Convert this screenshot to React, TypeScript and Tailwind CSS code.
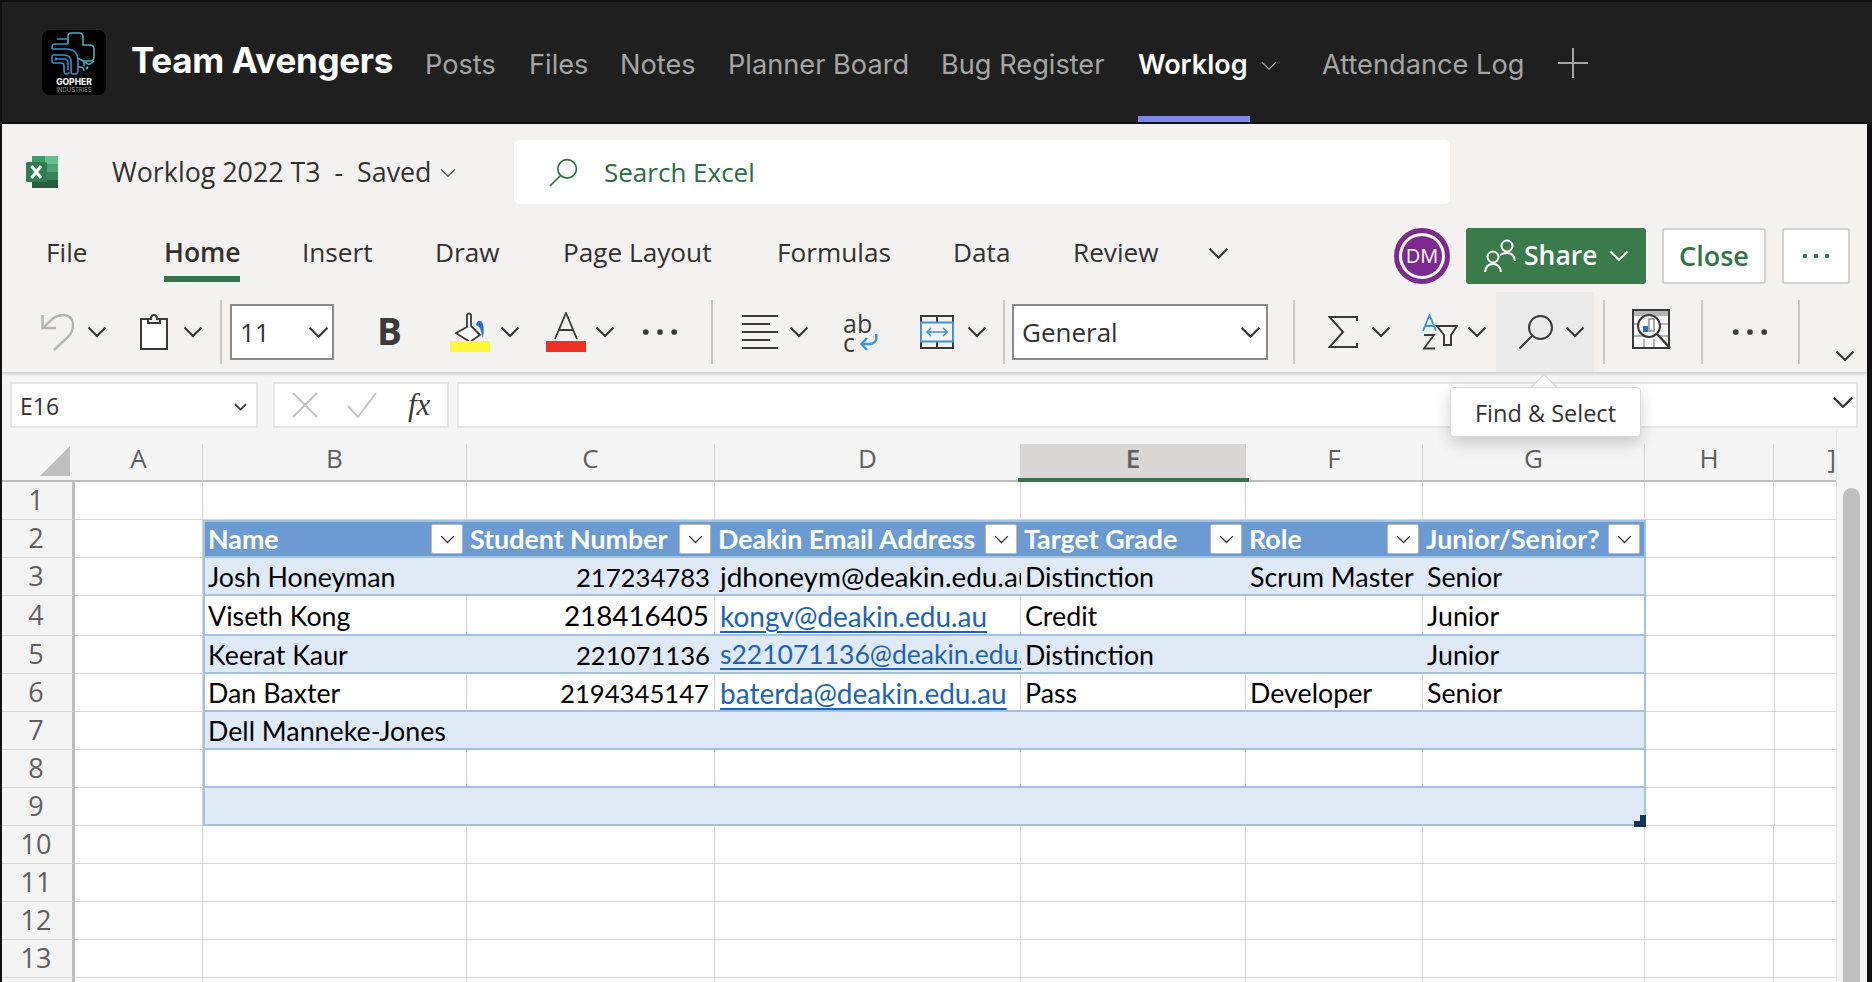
import React from "react";

const UI = "font-['Open_Sans',sans-serif]";
const SHEET = "font-[Lato,sans-serif]";

function Chev({ className = "", w = 20, color = "#333333", sw = 2 }: { className?: string; w?: number; color?: string; sw?: number }) {
  const h = Math.round(w * 0.6);
  return (
    <svg width={w} height={h} viewBox="0 0 20 12" fill="none" className={`shrink-0 ${className}`}>
      <path d="M1.5 1.5 L10 10 L18.5 1.5" stroke={color} strokeWidth={sw} />
    </svg>
  );
}

function Sep({ className = "" }: { className?: string }) {
  return <div className={`w-[2px] h-[64px] bg-[#c8c8c8] shrink-0 ${className}`} />;
}

function Dots({ className = "", w = 36, color = "#3b3a39" }: { className?: string; w?: number; color?: string }) {
  return (
    <svg width={w} height="8" viewBox="0 0 38 8" className={`shrink-0 ${className}`}>
      <circle cx="4" cy="4" r="3" fill={color} />
      <circle cx="19" cy="4" r="3" fill={color} />
      <circle cx="34" cy="4" r="3" fill={color} />
    </svg>
  );
}

function Logo() {
  return (
    <svg width="64" height="65" viewBox="0 0 64 65" className="shrink-0">
      <rect width="64" height="65" rx="8" fill="#000" />
      <g fill="none" strokeWidth="1.6">
        <path d="M26 14 V6 Q26 3 29 3 H37 Q41 3 41 7 V15 H48 Q52 15 52 19 V27 Q52 31 48 31 H42" stroke="#4fb0b8" />
        <path d="M42 31 V36" stroke="#3f9fb8" />
        <path d="M26 14 H13 Q10 14 10 17 V19 M25 9 H15" stroke="#3a8fc8" />
        <path d="M10 19 H24 Q36 19 36 31 V40 Q36 44 33 44 H31 Q29 44 29 41 V32 Q29 25 22 25 H11 Q10 25 10 27 V31 Q10 33 12 33 H19 Q22 33 22 36 V41 Q22 44 25 44 Q27 44 27 42" stroke="#3a8fc8" />
        <path d="M15 29 H22 Q26 29 26 33 V40" stroke="#2f8ad0" />
        <path d="M36 37 H38 Q42 37 42 41 M36 28 L46 34 Q48 35 52 31" stroke="#4aa5c0" />
      </g>
      <circle cx="14" cy="29" r="1.4" fill="#3a8fc8" />
      <circle cx="45" cy="38" r="1.4" fill="#4fb0b8" />
      <text x="32" y="55" textAnchor="middle" fill="#f1f1f1" fontSize="8.5" fontWeight="800" fontFamily="Inter,sans-serif">GOPHER</text>
      <text x="32" y="62" textAnchor="middle" fill="#9a9a9a" fontSize="6" fontFamily="Inter,sans-serif">INDUSTRIES</text>
    </svg>
  );
}

function ExcelIcon() {
  return (
    <svg width="32" height="32" viewBox="0 0 32 32" className="shrink-0">
      <rect x="6" y="0" width="13" height="8" fill="#3f9c6b" />
      <rect x="19" y="0" width="13" height="8" fill="#67c08c" />
      <rect x="6" y="8" width="13" height="8" fill="#3c9668" />
      <rect x="19" y="8" width="13" height="8" fill="#4aa474" />
      <rect x="6" y="16" width="13" height="8" fill="#256b42" />
      <rect x="19" y="16" width="13" height="8" fill="#37845a" />
      <rect x="6" y="24" width="26" height="8" fill="#285f3f" />
      <rect x="0" y="6" width="21" height="20" rx="1.5" fill="#2f7d4e" />
      <path d="M5.5 10 L15 22 M15 10 L5.5 22" stroke="#fff" strokeWidth="3" />
    </svg>
  );
}

function SearchGlass({ w, h, color, sw = 2, className = "" }: { w: number; h: number; color: string; sw?: number; className?: string }) {
  return (
    <svg width={w} height={h} viewBox="0 0 36 36" fill="none" className={`shrink-0 ${className}`}>
      <circle cx="22.5" cy="13.5" r="11.5" stroke={color} strokeWidth={sw} fill="none" />
      <path d="M14 22 L1.5 34.5" stroke={color} strokeWidth={sw} />
    </svg>
  );
}

function Undo({ className = "" }: { className?: string }) {
  return (
    <svg width="33" height="38" viewBox="0 0 33 38" fill="none" className={`shrink-0 ${className}`}>
      <path d="M1.5 2 V15 H15" stroke="#b3b3b3" strokeWidth="2.4" />
      <path d="M2 15 L12 5.5 Q17 2 23 2 Q32 3 32 12 Q32 18 28 23 L13 37" stroke="#b3b3b3" strokeWidth="2.4" />
    </svg>
  );
}

function Clipboard({ className = "" }: { className?: string }) {
  return (
    <svg width="28" height="36" viewBox="0 0 28 36" fill="none" className={`shrink-0 ${className}`}>
      <path d="M8 5 H1 V35 H27 V5 H20" stroke="#3b3a39" strokeWidth="2" fill="#fff" />
      <path d="M8 9 V5 H11 Q11 1 14 1 Q17 1 17 5 H20 V9 Z" stroke="#3b3a39" strokeWidth="2" fill="#f3f2f1" />
    </svg>
  );
}

function FillColor({ className = "" }: { className?: string }) {
  return (
    <svg width="40" height="40" viewBox="0 0 40 40" fill="none" className={`shrink-0 ${className}`}>
      <path d="M17 15 V3 Q19 0 21 3 V14 L30 23 L20 30 L6 21 Z" stroke="#3b3a39" strokeWidth="1.8" fill="#fff" />
      <path d="M26 13 Q27 8 31 9 Q35 12 33 26 Q31 20 30 16 Q28 14 26 13 Z" fill="#2a6fc0" />
      <rect x="0" y="29" width="40" height="11" fill="#fdf83a" />
    </svg>
  );
}

function FontColor({ className = "" }: { className?: string }) {
  return (
    <svg width="40" height="40" viewBox="0 0 40 40" fill="none" className={`shrink-0 ${className}`}>
      <path d="M9 27 L20 1 L31 27 M13 18 H27" stroke="#3b3a39" strokeWidth="1.8" />
      <rect x="0" y="29" width="40" height="11" fill="#ee2f24" />
    </svg>
  );
}

function AlignLeft({ className = "" }: { className?: string }) {
  return (
    <svg width="36" height="34" viewBox="0 0 36 34" className={`shrink-0 ${className}`}>
      <path d="M0 1 H36 M0 9 H28 M0 17 H36 M0 25 H28 M0 33 H36" stroke="#3b3a39" strokeWidth="2" />
    </svg>
  );
}

function Wrap({ className = "" }: { className?: string }) {
  return (
    <div className={`relative w-[36px] h-[38px] shrink-0 ${className}`}>
      <span className={`block ${UI} text-[25px] leading-[21px] text-[#3b3a39]`}>ab</span>
      <span className={`block ${UI} text-[25px] leading-[16px] text-[#3b3a39]`}>c</span>
      <svg width="20" height="18" viewBox="0 0 20 18" fill="none" className="absolute right-[0px] bottom-[0px]">
        <path d="M17 1 Q19 10 11 11 H3 M8 5 L2.5 11 L8 17" stroke="#3f94d4" strokeWidth="2.4" />
      </svg>
    </div>
  );
}

function Merge({ className = "" }: { className?: string }) {
  return (
    <svg width="34" height="34" viewBox="0 0 34 34" fill="none" className={`shrink-0 ${className}`}>
      <rect x="1" y="1" width="32" height="32" stroke="#3b3a39" strokeWidth="2" fill="#f3f2f1" />
      <path d="M17 1 V7 M17 27 V33" stroke="#3b3a39" strokeWidth="2" />
      <rect x="1" y="7.5" width="32" height="19" stroke="#3f94d4" strokeWidth="2" fill="#f3f2f1" />
      <path d="M7 17 H27 M11 13 L7 17 L11 21 M23 13 L27 17 L23 21" stroke="#3f94d4" strokeWidth="1.6" />
    </svg>
  );
}

function Sigma({ className = "" }: { className?: string }) {
  return (
    <svg width="30" height="32" viewBox="0 0 30 32" fill="none" className={`shrink-0 ${className}`}>
      <path d="M29 5 V1 H1.5 L15 16 L1.5 31 H29 V27" stroke="#3b3a39" strokeWidth="2" />
    </svg>
  );
}

function SortFilter({ className = "" }: { className?: string }) {
  return (
    <svg width="36" height="36" viewBox="0 0 36 36" fill="none" className={`shrink-0 ${className}`}>
      <path d="M1 17 L7.5 1 L14 17 M3.5 12 H11.5" stroke="#3f94d4" strokeWidth="1.8" />
      <path d="M2 21 H12 L2 34.5 H13" stroke="#3b3a39" strokeWidth="1.8" />
      <path d="M15 12 H35 L29 21 V31 H22 V21 Z" stroke="#3b3a39" strokeWidth="2" fill="#f3f2f1" />
    </svg>
  );
}

function Analyze({ className = "" }: { className?: string }) {
  return (
    <svg width="40" height="40" viewBox="0 0 40 40" fill="none" className={`shrink-0 ${className}`}>
      <rect x="1" y="1" width="36" height="38" fill="#fafafa" stroke="#3b3a39" strokeWidth="2" />
      <rect x="2" y="2" width="34" height="5" fill="#b5b5b5" />
      <path d="M2 15 H8 M28 15 H36 M2 27 H12 M28 27 H36 M12 30 V38 M22 30 V38" stroke="#b5b5b5" strokeWidth="2" />
      <circle cx="17" cy="17" r="11" fill="#fff" stroke="#3b3a39" strokeWidth="2" />
      <rect x="11" y="17" width="5" height="6" fill="#2a6fc0" />
      <rect x="17" y="10" width="5" height="12" fill="#fff" stroke="#8a8a8a" strokeWidth="1.5" />
      <path d="M25 25 L38 39" stroke="#3b3a39" strokeWidth="2.4" />
    </svg>
  );
}

function People() {
  return (
    <svg width="32" height="34" viewBox="0 0 32 34" fill="none" className="shrink-0">
      <circle cx="9" cy="18" r="5.5" stroke="#fff" strokeWidth="2" />
      <path d="M1 33 Q2 25 9 25 Q16 25 17 33" stroke="#fff" strokeWidth="2" />
      <circle cx="23" cy="7" r="5.5" stroke="#fff" strokeWidth="2" />
      <path d="M16 16 Q19 14 23 14 Q30 14 31 22" stroke="#fff" strokeWidth="2" />
    </svg>
  );
}

function TopBar() {
  const tab = "text-[27.2px] text-[#a5a5a5] whitespace-nowrap";
  return (
    <div className="ml-[2px] mt-[2px] h-[120px] bg-[#1f1f1f] flex items-start font-['Inter',sans-serif]">
      <div className="ml-[40px] mt-[28px]">
        <Logo />
      </div>
      <div className="ml-[25px] w-[294px] mt-[34px] text-[35px] leading-[48px] font-bold text-white whitespace-nowrap tracking-[-0.3px]">Team Avengers</div>
      <div className="flex items-start h-[120px] pt-[43px] leading-[40px]">
        <div className={`${tab} w-[104px]`}>Posts</div>
        <div className={`${tab} w-[91px]`}>Files</div>
        <div className={`${tab} w-[108px]`}>Notes</div>
        <div className={`${tab} w-[213px]`}>Planner Board</div>
        <div className={`${tab} w-[197px]`}>Bug Register</div>
        <div className="w-[184px] h-[77px] flex items-start">
          <div className="w-[112px] h-[77px] border-b-[6px] border-[#7f87ea] text-[27px] font-semibold text-white">Worklog</div>
          <Chev w={16} color="#a5a5a5" sw={1.6} className="ml-[11px] mt-[16px]" />
        </div>
        <div className={`${tab} w-[236px]`}>Attendance Log</div>
        <svg width="30" height="30" viewBox="0 0 30 30" className="mt-[3px] shrink-0">
          <path d="M15 0 V30 M0 15 H30" stroke="#a5a5a5" strokeWidth="2" />
        </svg>
      </div>
    </div>
  );
}

function TitleRow() {
  return (
    <div className={`h-[92px] pt-[4px] flex items-center ${UI}`}>
      <div className="ml-[24px]">
        <ExcelIcon />
      </div>
      <div className="ml-[54px] w-[402px] flex items-center text-[26.8px] text-[#323130] whitespace-nowrap">
        <span>Worklog 2022 T3&nbsp; -&nbsp; Saved</span>
        <Chev w={16} color="#444" sw={1.6} className="ml-[8px] mt-[2px]" />
      </div>
      <div className="w-[936px] h-[64px] bg-white rounded-[6px] flex items-center pl-[35px]">
        <SearchGlass w={29} h={29} color="#2b6a3f" />
        <span className="ml-[26px] text-[26px] text-[#2d6a42]">Search Excel</span>
      </div>
    </div>
  );
}

function MenuRow() {
  const t = "h-[66px] pt-[12px] text-[26.2px] leading-[48px] text-[#323130] whitespace-nowrap border-b-[6px] border-transparent";
  return (
    <div className={`h-[76px] flex items-start ${UI}`}>
      <div className={`${t} ml-[44px] w-[118px]`}>File</div>
      <div className="w-[138px]">
        <div className="w-[76px] h-[66px] pt-[12px] text-[26.5px] leading-[48px] font-semibold text-[#323130] whitespace-nowrap border-b-[6px] border-[#35744a]">Home</div>
      </div>
      <div className={`${t} w-[133px]`}>Insert</div>
      <div className={`${t} w-[128px]`}>Draw</div>
      <div className={`${t} w-[214px]`}>Page Layout</div>
      <div className={`${t} w-[176px]`}>Formulas</div>
      <div className={`${t} w-[120px]`}>Data</div>
      <div className={`${t} w-[135px]`}>Review</div>
      <Chev w={21} className="mt-[31px]" />
      <div className="ml-[165px] mt-[12px] w-[56px] h-[56px] rounded-full border-[5px] border-[#7b2a8f] bg-white p-[3px] shrink-0">
        <div className="w-full h-full rounded-full bg-[#7b2a8f] text-white text-[20px] flex items-center justify-center">DM</div>
      </div>
      <div className="ml-[16px] mt-[12px] w-[180px] h-[56px] rounded-[3px] bg-[#3a7a4b] flex items-center pl-[18px] text-white text-[26.5px] font-semibold">
        <People />
        <span className="ml-[8px]">Share</span>
        <Chev w={20} color="#fff" className="ml-[12px]" />
      </div>
      <div className="ml-[16px] mt-[12px] w-[104px] h-[56px] rounded-[3px] bg-white border-2 border-[#d2d2d2] flex items-center justify-center text-[#35744a] text-[27px] font-semibold">Close</div>
      <div className="ml-[16px] mt-[12px] w-[68px] h-[56px] rounded-[3px] bg-white border-2 border-[#d2d2d2] flex items-center justify-center">
        <Dots w={28} color="#35744a" />
      </div>
    </div>
  );
}

function ToolRow() {
  const box = "h-[56px] bg-white border-2 border-[#8a8a8a] flex items-center shrink-0 text-[26px] text-[#323130]";
  return (
    <div className={`h-[80px] flex items-center ${UI}`}>
      <Undo className="ml-[39px]" />
      <Chev className="ml-[13px]" />
      <Clipboard className="ml-[33px]" />
      <Chev className="ml-[15px]" />
      <Sep className="ml-[17px]" />
      <div className={`${box} ml-[8px] w-[104px] pl-[8px]`}>
        <span>11</span>
        <Chev w={21} className="ml-auto mr-[3px]" />
      </div>
      <div className="ml-[43px] w-[26px] -mt-[4px] text-[37px] font-bold font-['Open_Sans',sans-serif] text-[#3b3a39] leading-none">B</div>
      <FillColor className="ml-[47px]" />
      <Chev className="ml-[10px]" />
      <FontColor className="ml-[26px]" />
      <Chev className="ml-[9px]" />
      <Dots className="ml-[27px]" />
      <Sep className="ml-[33px]" />
      <AlignLeft className="ml-[29px]" />
      <Chev className="ml-[11px]" />
      <Wrap className="ml-[34px]" />
      <Merge className="ml-[41px]" />
      <Chev className="ml-[13px]" />
      <Sep className="ml-[16px]" />
      <div className={`${box} ml-[7px] w-[256px] pl-[8px]`}>
        <span>General</span>
        <Chev w={21} className="ml-auto mr-[5px]" />
      </div>
      <Sep className="ml-[25px]" />
      <Sigma className="ml-[33px]" />
      <Chev className="ml-[13px]" />
      <SortFilter className="ml-[31px]" />
      <Chev className="ml-[9px]" />
      <div className="ml-[9px] w-[98px] h-[80px] bg-[#ebebeb] flex items-center pl-[22px] shrink-0">
        <SearchGlass w={36} h={36} color="#3b3a39" />
        <Chev className="ml-[11px]" />
      </div>
      <Sep className="ml-[9px]" />
      <Analyze className="ml-[27px] -mt-[6px]" />
      <Sep className="ml-[29px]" />
      <Dots className="ml-[29px]" w={36} />
      <Sep className="ml-[30px]" />
      <Chev className="ml-[35px] self-end mb-[10px]" />
    </div>
  );
}

function FormulaBar() {
  const box = "h-[46px] bg-white border-2 border-[#e6e6e6] flex items-center shrink-0";
  return (
    <div className={`h-[58px] pt-[10px] flex items-start bg-[#f5f5f5] ${UI}`}>
      <div className={`${box} ml-[8px] w-[248px] pl-[8px] pt-[3px] text-[23px] text-[#323130]`}>
        <span>E16</span>
        <Chev w={13} color="#333" sw={2.6} className="ml-auto mr-[9px]" />
      </div>
      <div className={`${box} ml-[15px] w-[176px] pl-[16px]`}>
        <svg width="28" height="26" viewBox="0 0 28 26" className="shrink-0">
          <path d="M2 1 L26 25 M26 1 L2 25" stroke="#c4c4c4" strokeWidth="2" />
        </svg>
        <svg width="30" height="26" viewBox="0 0 30 26" className="ml-[28px] shrink-0" fill="none">
          <path d="M1 14 L11 25 L29 1" stroke="#c4c4c4" strokeWidth="2" />
        </svg>
        <span className="ml-[31px] -mt-[2px] font-['Liberation_Serif',serif] italic text-[31px] leading-none text-[#3b3a39]">fx</span>
      </div>
      <div className={`${box} ml-[8px] w-[1401px] justify-end pr-[2px]`}>
        <Chev w={22} className="-mt-[6px]" />
      </div>
    </div>
  );
}

const HEAD = "text-[26px] text-[#5f5f5f]";

function HCell({ w, label, active = false, line = true }: { w: string; label: string; active?: boolean; line?: boolean }) {
  return (
    <div className={`${w} h-[37px] mt-[14px] pb-[8px] flex items-center justify-center ${HEAD} ${line ? "border-r border-[#d2d2d2]" : ""} ${active ? "bg-[#d8d7d5] text-[#2f7045] font-semibold" : ""}`}>
      {label}
    </div>
  );
}

function ColHeader() {
  return (
    <div className={`relative h-[52px] flex bg-[#f5f5f5] border-b-2 border-[#bdbdbd] ${UI}`}>
      <div className="w-[73px] flex items-end justify-end pr-[5px] pb-[4px]">
        <svg width="30" height="30" viewBox="0 0 30 30" className="shrink-0">
          <path d="M30 0 V30 H0 Z" fill="#bfbfbf" />
        </svg>
      </div>
      <HCell w="w-[128px]" label="A" />
      <HCell w="w-[264px]" label="B" />
      <HCell w="w-[248px]" label="C" />
      <HCell w="w-[306px]" label="D" />
      <div className="w-[225px] relative">
        <HCell w="w-[225px]" label="E" active />
        <div className="absolute left-[-3px] right-[-3px] bottom-[-2px] h-[4px] bg-[#35744a]" />
      </div>
      <HCell w="w-[177px]" label="F" />
      <HCell w="w-[222px]" label="G" />
      <HCell w="w-[129px]" label="H" />
      <div className={`w-[62px] h-[37px] mt-[14px] pb-[8px] flex items-center justify-end ${HEAD}`}>]</div>
    </div>
  );
}

function RowHead({ n }: { n?: number }) {
  return (
    <div className={`w-[73px] shrink-0 bg-[#f4f4f4] border-r-[3px] border-[#bdbdbd] border-b border-b-[#d8d8d8] flex items-center justify-center pr-[2px] text-[27px] text-[#5f5f5f] ${UI}`}>
      {n}
    </div>
  );
}

function PlainRow({ n, h = "h-[38px]" }: { n?: number; h?: string }) {
  const c = "border-r border-b border-[#d6d6d6] shrink-0";
  return (
    <div className={`${h} flex`}>
      <RowHead n={n} />
      <div className={`${c} w-[128px]`} />
      <div className={`${c} w-[264px]`} />
      <div className={`${c} w-[248px]`} />
      <div className={`${c} w-[306px]`} />
      <div className={`${c} w-[225px]`} />
      <div className={`${c} w-[177px]`} />
      <div className={`${c} w-[222px]`} />
      <div className={`${c} w-[129px]`} />
      <div className={`border-b border-[#d6d6d6] w-[62px] shrink-0`} />
    </div>
  );
}

const COLS = ["w-[262px]", "w-[248px]", "w-[306px]", "w-[225px]", "w-[177px]", "w-[221px]"];
const PADS = ["pl-[3px]", "justify-end pr-[5px] text-[25.7px]", "pl-[5px] overflow-hidden", "pl-[4px]", "pl-[4px]", "pl-[4px]"];

function TableRow({
  n,
  h = "h-[38px]",
  band,
  cells,
}: {
  n: number;
  h?: string;
  band: boolean;
  cells: React.ReactNode[];
}) {
  return (
    <div className={`${h} flex`}>
      <RowHead n={n} />
      <div className="border-r border-b border-[#d6d6d6] w-[128px] shrink-0" />
      <div className={`w-[1443px] shrink-0 flex border-x-2 border-b-2 border-[#a3c2e3] ${band ? "bg-[#dfeaf6]" : "bg-white"} ${SHEET} text-[26.8px] text-black`}>
        {cells.map((c, i) => (
          <div
            key={i}
            className={`${COLS[i]} shrink-0 flex items-center pt-[2px] whitespace-nowrap ${PADS[i]} ${!band && i < 5 ? "border-r border-[#d6d6d6]" : ""}`}
          >
            {c}
          </div>
        ))}
      </div>
      <div className="border-r border-b border-[#d6d6d6] w-[129px] shrink-0" />
      <div className="border-b border-[#d6d6d6] w-[62px] shrink-0" />
    </div>
  );
}

function HeaderRow() {
  const labels = ["Name", "Student Number", "Deakin Email Address", "Target Grade", "Role", "Junior/Senior?"];
  return (
    <div className="h-[38px] flex">
      <RowHead n={2} />
      <div className="border-r border-b border-[#d6d6d6] w-[128px] shrink-0" />
      <div className={`w-[1443px] shrink-0 flex border-2 border-[#a3c2e3] bg-[#6b9bd2] ${SHEET} text-[26.8px] font-bold text-white`}>
        {labels.map((l, i) => (
          <div key={l} className={`${COLS[i]} shrink-0 flex items-center justify-between pl-[3px] pr-[4px] whitespace-nowrap`}>
            <span>{l}</span>
            <div className="w-[32px] h-[30px] bg-white border border-[#b8b8b8] rounded-[2px] flex items-center justify-center shrink-0">
              <Chev w={15} color="#333" sw={1.8} />
            </div>
          </div>
        ))}
      </div>
      <div className="border-r border-b border-[#d6d6d6] w-[129px] shrink-0" />
      <div className="border-b border-[#d6d6d6] w-[62px] shrink-0" />
    </div>
  );
}

function Mail({ children, small = false }: { children: React.ReactNode; small?: boolean }) {
  return <span className={`${small ? "text-[26.5px]" : "text-[28px]"} text-[#1f63b8] underline decoration-2 underline-offset-[4px]`}>{children}</span>;
}

function Sheet() {
  return (
    <div className="flex h-[552px] overflow-hidden">
      <div className="w-[1834px] shrink-0 bg-white relative overflow-hidden">
        <ColHeader />
        <PlainRow n={1} />
        <HeaderRow />
        <TableRow n={3} band cells={["Josh Honeyman", "217234783", <span className="text-[27.9px]">jdhoneym@deakin.edu.au</span>, "Distinction", "Scrum Master", "Senior"]} />
        <TableRow n={4} h="h-[40px]" band={false} cells={["Viseth Kong", <span className="text-[27.8px]">218416405</span>, <Mail>kongv@deakin.edu.au</Mail>, "Credit", "", "Junior"]} />
        <TableRow n={5} band cells={["Keerat Kaur", "221071136", <Mail small>s221071136@deakin.edu.au</Mail>, "Distinction", "", "Junior"]} />
        <TableRow n={6} band={false} cells={["Dan Baxter", "2194345147", <Mail>baterda@deakin.edu.au</Mail>, "Pass", "Developer", "Senior"]} />
        <TableRow n={7} band cells={["Dell Manneke-Jones", "", "", "", "", ""]} />
        <TableRow n={8} band={false} cells={["", "", "", "", "", ""]} />
        <TableRow n={9} band cells={["", "", "", "", "", ""]} />
        <PlainRow n={10} />
        <PlainRow n={11} />
        <PlainRow n={12} />
        <PlainRow n={13} />
        <PlainRow />
        <div className="absolute left-[1632px] top-[385px] w-[12px] h-[12px]">
          <div className="ml-[6px] w-[6px] h-[6px] bg-[#12355b]" />
          <div className="w-[12px] h-[6px] bg-[#12355b]" />
        </div>
      </div>
      <div className="w-[31px] shrink-0 bg-[#f5f5f5] border-l border-[#e6e6e6] pt-[58px] pl-[6px]">
        <div className="w-[17px] h-[520px] bg-[#bfbfbf] rounded-t-full" />
      </div>
    </div>
  );
}

function Tooltip() {
  return (
    <div className={`absolute left-[1450px] top-[376px] w-[191px] ${UI} z-20`}>
      <div className="absolute left-[84px] top-[2px] w-[20px] h-[20px] bg-white rotate-45 border-l border-t border-[#d8d8d8]" />
      <div className="mt-[11px] h-[50px] pt-[3px] bg-white border border-[#d8d8d8] rounded-[4px] shadow-[0_6px_16px_rgba(0,0,0,0.18)] flex items-center justify-center text-[23.5px] text-[#323130] whitespace-nowrap relative">
        Find &amp; Select
      </div>
    </div>
  );
}

export default function App() {
  return (
    <div className="relative w-[1872px] h-[982px] bg-[#111111] overflow-hidden">
      <TopBar />
      <div className="mt-[2px] ml-[2px] mr-[5px]">
        <div className="bg-[#f3f2f1] relative z-10 shadow-[0_2px_3px_rgba(0,0,0,0.18)] h-[248px]">
          <TitleRow />
          <MenuRow />
          <ToolRow />
        </div>
        <FormulaBar />
        <Sheet />
      </div>
      <Tooltip />
    </div>
  );
}
